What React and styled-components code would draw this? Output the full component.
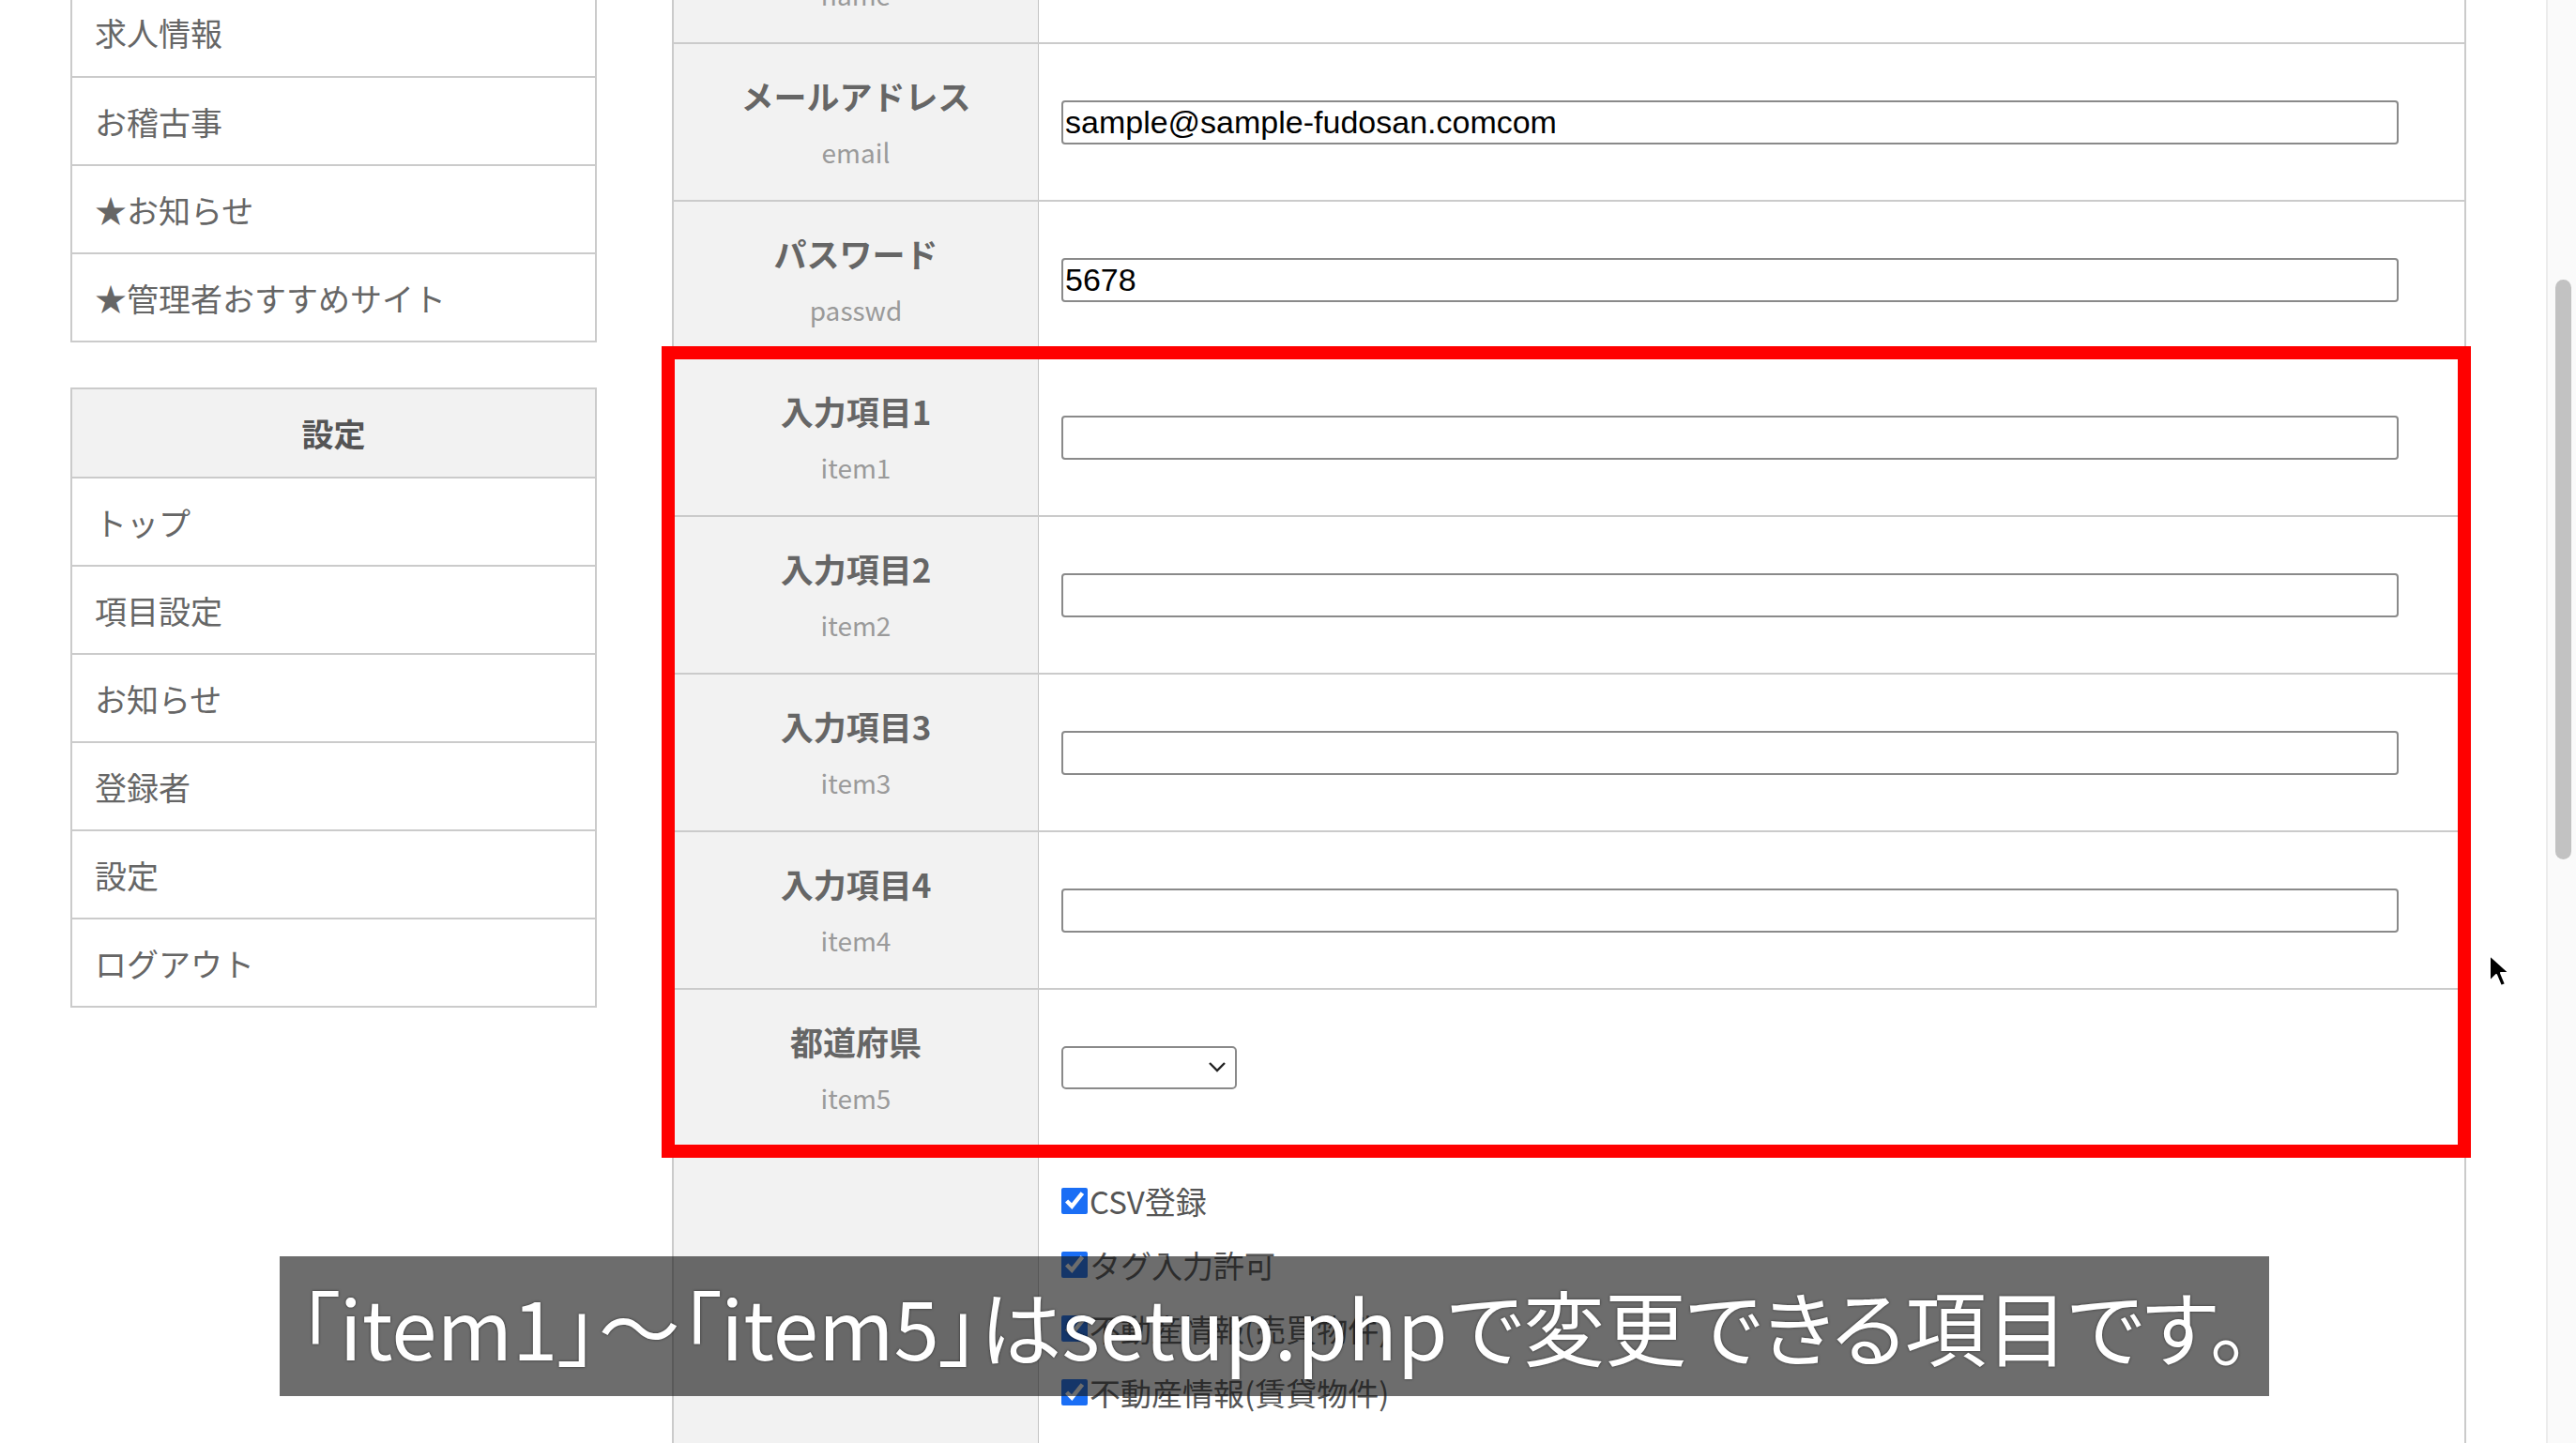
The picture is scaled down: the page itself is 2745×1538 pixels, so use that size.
import React from "react";
import styled, { createGlobalStyle } from "styled-components";

const Global = createGlobalStyle`
  html, body { margin: 0; padding: 0; background: #ffffff; overflow: hidden; }
  body { font-family: "Noto Sans CJK JP", "Noto Sans", sans-serif; }
  * { box-sizing: border-box; }
`;

const Screen = styled.div`
  display: flex;
  width: 2745px;
  height: 1538px;
  overflow: hidden;
  background: #fff;
`;

const Viewport = styled.div`
  position: relative;
  flex: 1;
  height: 100%;
  overflow: hidden;
`;

const Page = styled.div`
  display: flex;
  align-items: flex-start;
  gap: 80px;
  padding-left: 75px;
  margin-top: -121px;
`;

const Sidebar = styled.nav`
  width: 561px;
  margin-top: 106px;
  display: flex;
  flex-direction: column;
  gap: 48px;
`;

const MenuGroup = styled.ul`
  list-style: none;
  margin: 0;
  padding: 0;
  border: 2px solid #cbcbcb;
`;

const MenuHeader = styled.li`
  height: 93px;
  display: flex;
  align-items: center;
  justify-content: center;
  background: #f2f2f2;
  color: #555;
  font-size: 34px;
  font-weight: 700;
`;

const MenuItem = styled.li`
  height: 94px;
  display: flex;
  align-items: center;
  padding-left: 24px;
  color: #666;
  font-size: 34px;
  border-top: ${(p) => (p.$first ? "none" : "2px solid #cbcbcb")};
`;

const FormTable = styled.div`
  width: 1912px;
  border-left: 2px solid #cbcbcb;
  border-right: 2px solid #cbcbcb;
`;

const Row = styled.div`
  display: grid;
  grid-template-columns: 389px 1fr;
  height: ${(p) => p.$h || 168}px;
  border-bottom: ${(p) => (p.$last ? "none" : "2px solid #cbcbcb")};
`;

const LabelCell = styled.div`
  background: #f2f2f2;
  border-right: 1px solid #c4c4c4;
  display: flex;
  flex-direction: column;
  align-items: center;
  justify-content: center;
  gap: 16px;
`;

const LabelMain = styled.div`
  font-size: 35px;
  line-height: 48px;
  font-weight: 700;
  color: #666;
`;

const LabelSub = styled.div`
  font-size: 28px;
  line-height: 40px;
  color: #9a9a9a;
`;

const ValueCell = styled.div`
  display: flex;
  align-items: center;
  padding-left: 24px;
`;

const TextInput = styled.input`
  width: 1425px;
  height: 47px;
  border: 2px solid #8a8a8a;
  border-radius: 4px;
  padding: 1px 2px;
  font-family: "Liberation Sans", Arial, sans-serif;
  font-size: 34px;
  color: #000;
  background: #fff;
  outline: none;
`;

const SelectWrap = styled.div`
  position: relative;
  width: 187px;
  height: 46px;
`;

const Select = styled.select`
  appearance: none;
  width: 100%;
  height: 100%;
  border: 2px solid #8a8a8a;
  border-radius: 5px;
  background: #fff;
  outline: none;
`;

const Chevron = styled.svg`
  position: absolute;
  right: 11px;
  top: 16px;
  width: 20px;
  height: 13px;
  pointer-events: none;
`;

const CheckList = styled.div`
  display: flex;
  flex-direction: column;
  padding: 35px 0 0 24px;
  gap: 24px;
`;

const CheckLabel = styled.label`
  display: flex;
  align-items: center;
  height: 44px;
  font-size: 33px;
  color: #555;
`;

const Check = styled.input`
  width: 28px;
  height: 28px;
  margin: 0 2px 0 0;
  accent-color: #1a6ef5;
`;

const Highlight = styled.div`
  position: absolute;
  left: 705px;
  top: 369px;
  width: 1928px;
  height: 865px;
  border: 14px solid #ff0000;
  pointer-events: none;
`;

const Caption = styled.div`
  position: absolute;
  left: 298px;
  top: 1339px;
  width: 2120px;
  height: 149px;
  background: rgba(20, 20, 20, 0.62);
  display: flex;
  align-items: center;
  justify-content: center;
  padding-bottom: 4px;
  color: #fff;
  font-size: 87px;
  font-weight: 400;
  font-feature-settings: "palt";
  white-space: nowrap;
  text-shadow: 0 0 3px rgba(0, 0, 0, 0.6);
`;

const Cursor = styled.svg`
  position: absolute;
  left: 2650px;
  top: 1016px;
  width: 26px;
  height: 38px;
`;

const ScrollTrack = styled.div`
  width: 32px;
  height: 100%;
  border-left: 2px solid #ececec;
  background: #fafafa;
  padding: 298px 5px 0 8px;
`;

const Thumb = styled.div`
  width: 17px;
  height: 618px;
  border-radius: 9px;
  background: #c2c2c2;
`;

const sideTop = ["求人情報", "お稽古事", "★お知らせ", "★管理者おすすめサイト"];
const sideSettings = ["トップ", "項目設定", "お知らせ", "登録者", "設定", "ログアウト"];

const fields = [
  { label: "名前", sub: "name" },
  { label: "メールアドレス", sub: "email", value: "sample@sample-fudosan.comcom" },
  { label: "パスワード", sub: "passwd", value: "5678" },
  { label: "入力項目1", sub: "item1", value: "" },
  { label: "入力項目2", sub: "item2", value: "" },
  { label: "入力項目3", sub: "item3", value: "" },
  { label: "入力項目4", sub: "item4", value: "" },
];

const checks = [
  { t: "CSV登録", c: true },
  { t: "タグ入力許可", c: true },
  { t: "不動産情報(売買物件)", c: true },
  { t: "不動産情報(賃貸物件)", c: true },
  { t: "リンク情報", c: false },
];

export default function App() {
  return (
    <>
      <Global />
      <Screen>
        <Viewport>
          <Page>
            <Sidebar>
              <MenuGroup>
                {sideTop.map((s, i) => (
                  <MenuItem key={s} $first={i === 0}>{s}</MenuItem>
                ))}
              </MenuGroup>
              <MenuGroup>
                <MenuHeader>設定</MenuHeader>
                {sideSettings.map((s) => (
                  <MenuItem key={s}>{s}</MenuItem>
                ))}
              </MenuGroup>
            </Sidebar>
            <FormTable>
              {fields.map((f) => (
                <Row key={f.sub}>
                  <LabelCell>
                    <LabelMain>{f.label}</LabelMain>
                    <LabelSub>{f.sub}</LabelSub>
                  </LabelCell>
                  <ValueCell>
                    {f.value !== undefined && (
                      <TextInput type="text" defaultValue={f.value} readOnly />
                    )}
                  </ValueCell>
                </Row>
              ))}
              <Row>
                <LabelCell>
                  <LabelMain>都道府県</LabelMain>
                  <LabelSub>item5</LabelSub>
                </LabelCell>
                <ValueCell>
                  <SelectWrap>
                    <Select defaultValue="">
                      <option value=""></option>
                    </Select>
                    <Chevron viewBox="0 0 20 13">
                      <path d="M2 2 L10 10 L18 2" fill="none" stroke="#222" strokeWidth="2.4" />
                    </Chevron>
                  </SelectWrap>
                </ValueCell>
              </Row>
              <Row $h={420} $last>
                <LabelCell />
                <CheckList>
                  {checks.map((c) => (
                    <CheckLabel key={c.t}>
                      <Check type="checkbox" defaultChecked={c.c} />
                      {c.t}
                    </CheckLabel>
                  ))}
                </CheckList>
              </Row>
            </FormTable>
          </Page>
          <Highlight />
          <Caption>「item1」〜「item5」はsetup.phpで変更できる項目です。</Caption>
          <Cursor viewBox="0 0 26 38">
            <path d="M3 2 L3 30 L10 23 L15 35 L20 33 L15 21 L24 21 Z" fill="#000" stroke="#fff" strokeWidth="2" strokeLinejoin="round" />
          </Cursor>
        </Viewport>
        <ScrollTrack>
          <Thumb />
        </ScrollTrack>
      </Screen>
    </>
  );
}
